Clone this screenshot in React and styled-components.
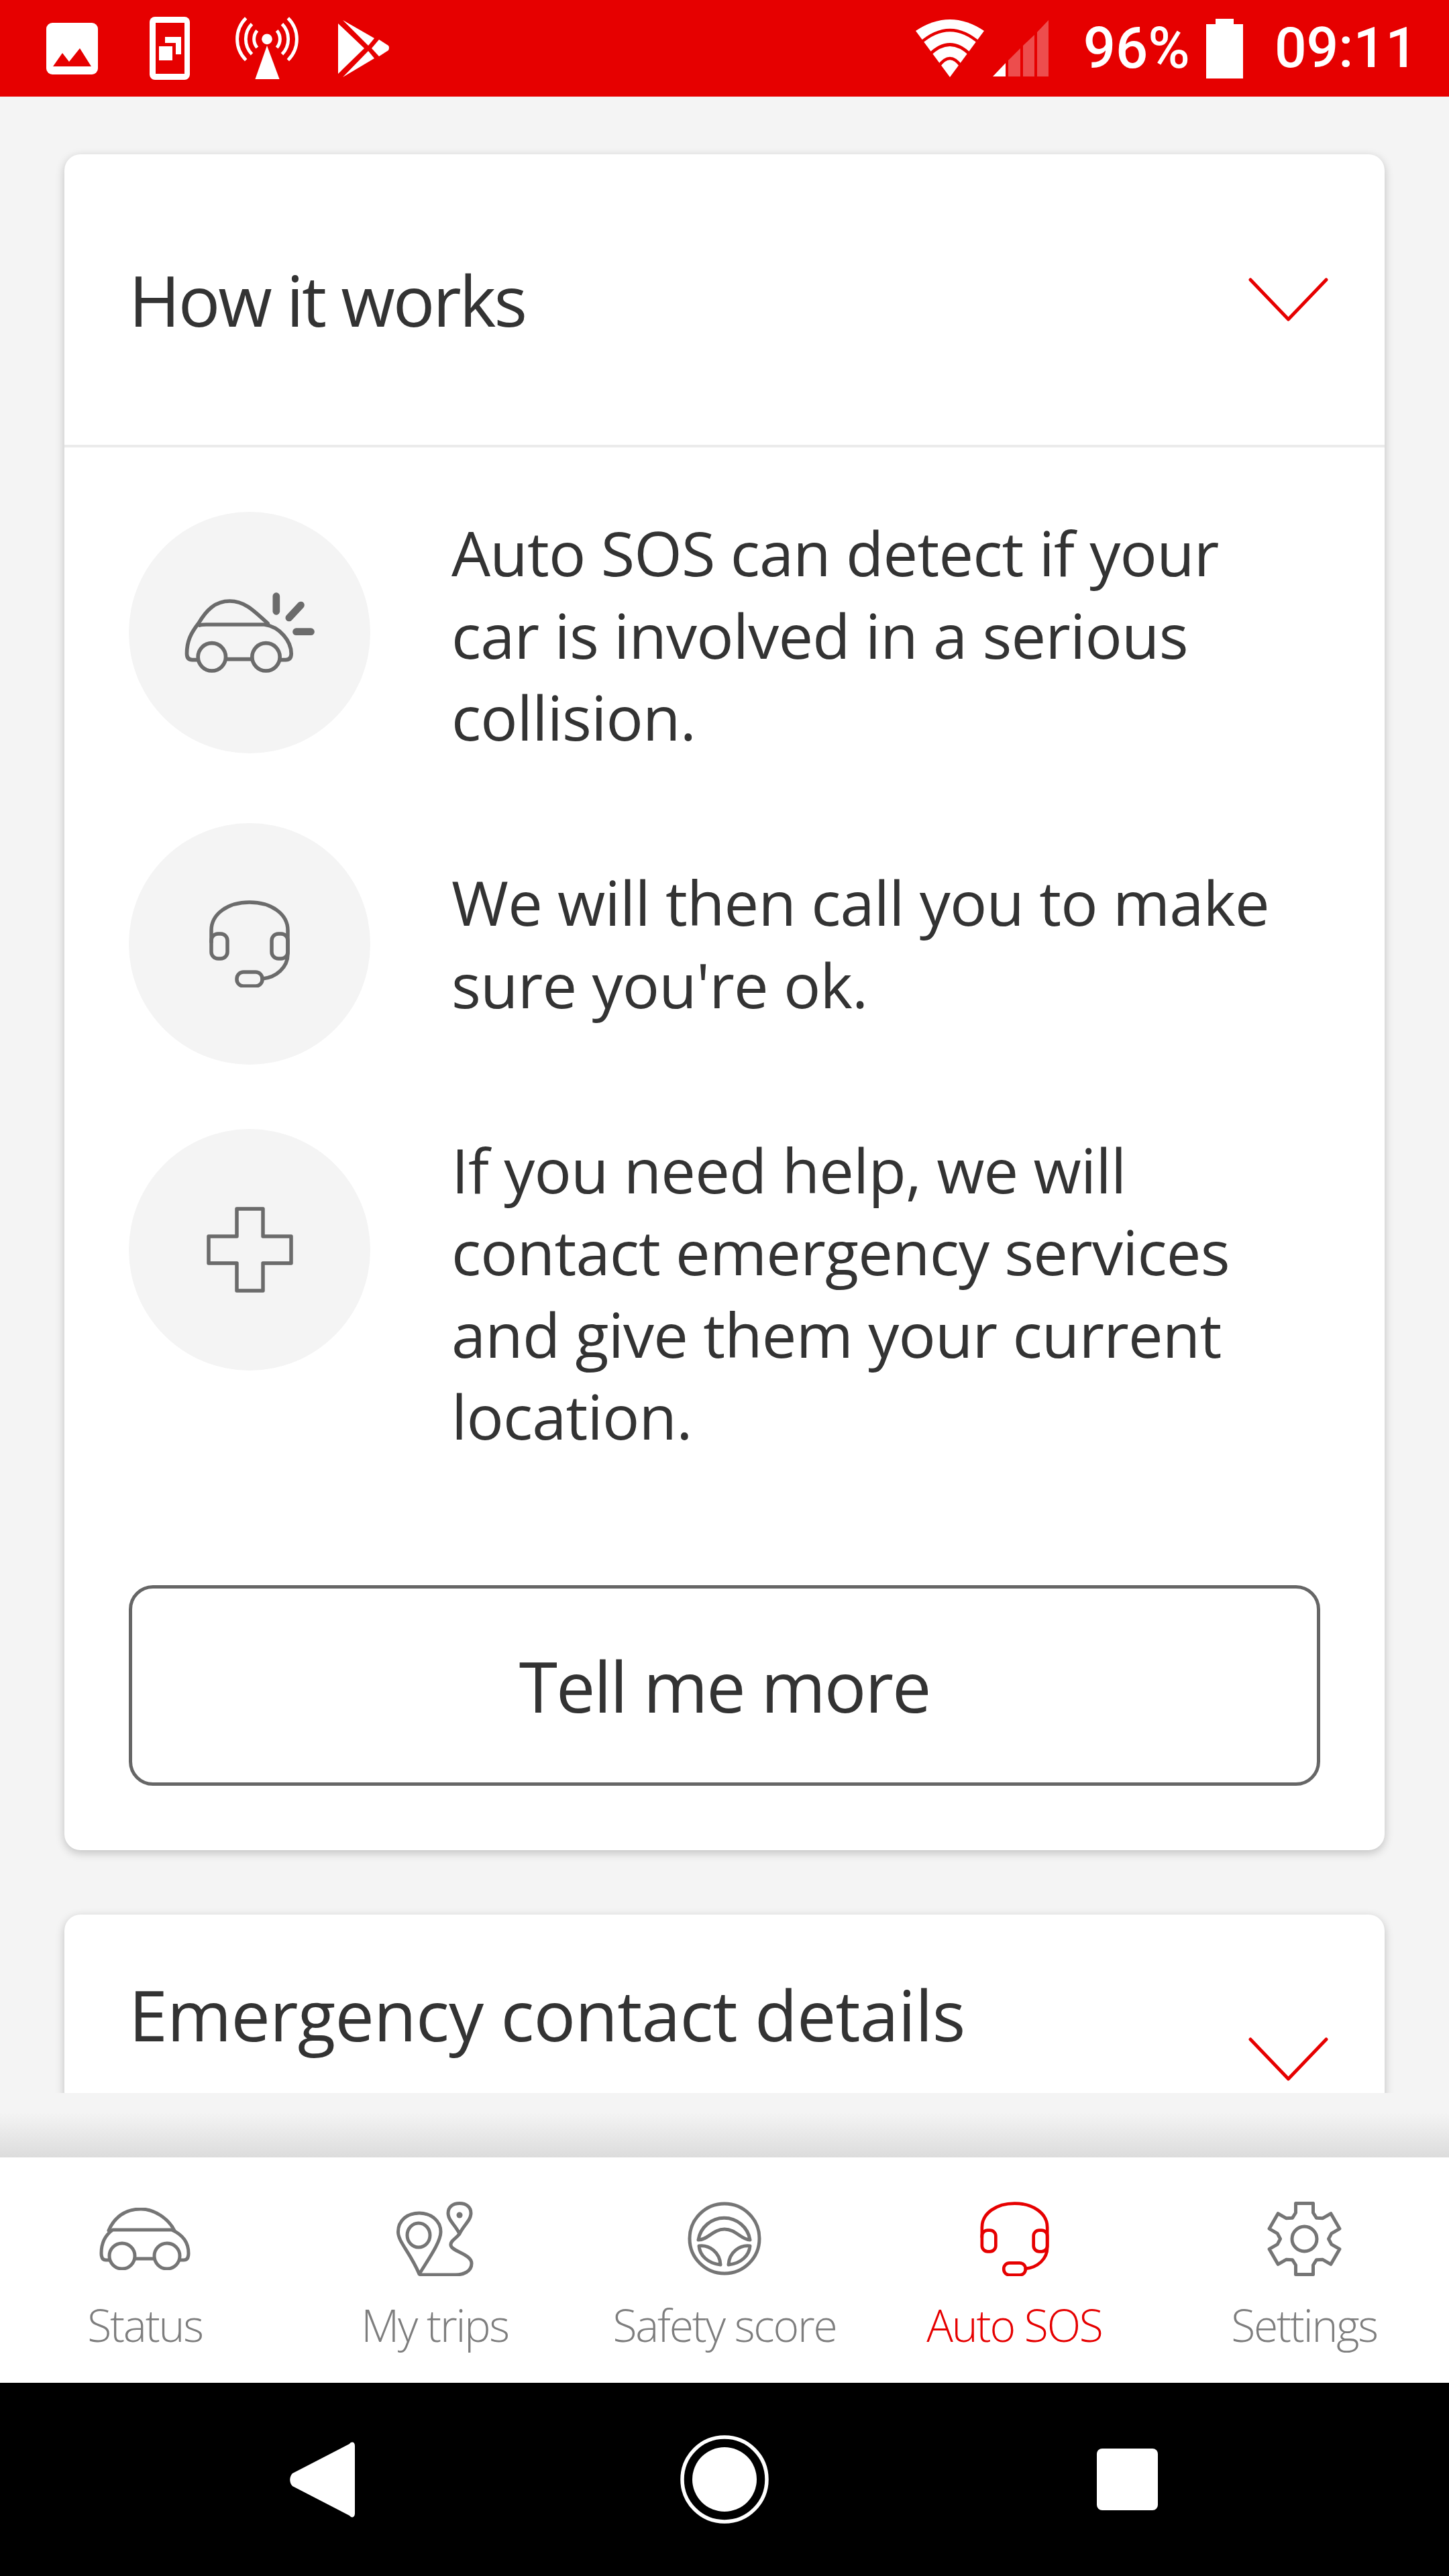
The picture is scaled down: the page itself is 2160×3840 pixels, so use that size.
import React from "react";
import styled, { createGlobalStyle } from "styled-components";

const RED = "#e60000";
const BODY_FONT = `"Open Sans", "Liberation Sans", sans-serif`;

const GlobalStyle = createGlobalStyle`
  html, body {
    margin: 0;
    padding: 0;
    background: #f4f4f4;
  }
`;

const gearPoints = () => {
  const pts = [];
  const c = 55.5;
  for (let i = 0; i < 6; i++) {
    const a = (i * Math.PI) / 3 - Math.PI / 2;
    const at = (r, off) => {
      const x = c + r * Math.cos(a) + off * Math.cos(a + Math.PI / 2);
      const y = c + r * Math.sin(a) + off * Math.sin(a + Math.PI / 2);
      return `${x.toFixed(1)},${y.toFixed(1)}`;
    };
    pts.push(at(39, -13), at(53, -13), at(53, 13), at(39, 13));
    const b = a + Math.PI / 6;
    pts.push(`${(c + 36 * Math.cos(b)).toFixed(1)},${(c + 36 * Math.sin(b)).toFixed(1)}`);
  }
  return pts.join(" ");
};

const ImageIcon = () => (
  <svg width="77" height="77" viewBox="0 0 77 77">
    <rect width="77" height="77" rx="9" fill="#fff" />
    <path d="M10 65 L24 45 L34 58 L50 38 L67 65 Z" fill={RED} />
  </svg>
);

const PhoneIcon = () => (
  <svg width="60" height="94" viewBox="0 0 60 94">
    <rect width="60" height="94" rx="8" fill="#fff" />
    <rect x="9" y="9" width="43" height="76" fill={RED} />
    <rect x="14" y="44" width="20" height="21" fill="#fff" />
    <path d="M23 30 H47 V56 H39 V39 H23 Z" fill="#fff" />
  </svg>
);

const AntennaIcon = () => (
  <svg width="94" height="94" viewBox="0 0 96 94" fill="none">
    <path d="M48 43 L67 94 H30 Z" fill="#fff" />
    <ellipse cx="48" cy="33" rx="8" ry="8" fill="#fff" />
    <g stroke="#fff" strokeWidth="5">
      <path d="M16 1 A45 45 0 0 0 16 65" />
      <path d="M25 10 A33 33 0 0 0 25 56" />
      <path d="M33 20 A20 20 0 0 0 33 46" />
      <path d="M80 1 A45 45 0 0 1 80 65" />
      <path d="M71 10 A33 33 0 0 1 71 56" />
      <path d="M63 20 A20 20 0 0 1 63 46" />
    </g>
  </svg>
);

const PlayIcon = () => (
  <svg width="77" height="85" viewBox="0 0 77 85" fill="#fff">
    <path d="M0 5 L39 42 L0 80 Z" />
    <path d="M7 0 L54 27 L45 38 Z" />
    <path d="M7 85 L54 57 L45 46 Z" />
    <path d="M61 29 L75 38 Q77 41 75 45 L61 54 L50 42 Z" />
  </svg>
);

const WifiIcon = () => (
  <svg width="102" height="86" viewBox="0 0 102 86" fill="none">
    <path d="M0 17 Q51 -17 102 17 L51 86 Z" fill="#fff" />
    <g stroke={RED} strokeWidth="4.5">
      <path d="M6 36 Q51 -4 96 36" />
      <path d="M20 53 Q51 22 82 53" />
      <path d="M34 70 Q51 46 68 70" />
    </g>
  </svg>
);

const SignalIcon = () => (
  <svg width="83" height="84" viewBox="0 0 83 84" fill="#fff">
    <path d="M0 84 L19 64 V84 Z" />
    <g opacity="0.3">
      <path d="M23 60 L41 42 V84 H23 Z" />
      <path d="M45 38 L62 22 V84 H45 Z" />
      <path d="M66 18 L83 0 V84 H66 Z" />
    </g>
  </svg>
);

const BatteryIcon = () => (
  <svg width="55" height="89" viewBox="0 0 55 89" fill="#fff">
    <path d="M14 0 H41 V8 H55 V89 H0 V8 H14 Z" />
  </svg>
);

const Chevron = () => (
  <svg width="119" height="65" viewBox="0 0 119 65" fill="none" stroke={RED} strokeWidth="5" strokeLinecap="round" strokeLinejoin="round">
    <path d="M3 3 L59.5 62 L116 3" />
  </svg>
);

const CrashCarIcon = () => (
  <svg width="197" height="124" viewBox="320 385 590 372" fill="none" stroke="#6b6b6b" strokeWidth="17" strokeLinecap="round" strokeLinejoin="round">
    <path d="M380 693 H358 Q333 693 333 665 C333 610 350 575 385 530 C420 470 460 430 525 430 C590 430 630 470 695 530" />
    <path d="M390 538 Q400 535 420 535 H680 C750 545 800 610 800 665 Q800 693 775 693 H752" />
    <circle cx="445" cy="680" r="62" />
    <circle cx="687" cy="680" r="62" />
    <path d="M510 690 H622" />
    <g strokeWidth="32">
      <path d="M733 408 V476" />
      <path d="M790 505 L843 448" />
      <path d="M822 567 H888" />
    </g>
  </svg>
);

const HeadsetIcon = ({ width, height, color }) => (
  <svg width={width} height={height} viewBox="0 0 120 130" fill="none" stroke={color} strokeWidth="5.5" strokeLinecap="round" strokeLinejoin="round">
    <path d="M3 62 V45 C3 20 28 3 60 3 C92 3 117 20 117 45 V80 C117 100 100 115 79 117" />
    <rect x="3" y="50" width="24" height="37" rx="10" />
    <rect x="93" y="50" width="24" height="37" rx="10" />
    <rect x="41" y="107" width="38" height="21" rx="10" />
  </svg>
);

const CrossIcon = () => (
  <svg width="129" height="128" viewBox="0 0 129 128" fill="none" stroke="#6b6b6b" strokeWidth="5.5" strokeLinejoin="round">
    <path d="M45 3 H84 V44 H126 V84 H84 V125 H45 V84 H3 V44 H45 Z" />
  </svg>
);

const CarIcon = () => (
  <svg width="136" height="93" viewBox="0 0 136 93" fill="none" stroke="#757575" strokeWidth="5" strokeLinecap="round" strokeLinejoin="round">
    <path d="M14 34 C22 15 38 2 62 2 C84 2 104 18 112 34" />
    <path d="M15 78 H10 Q3 78 3 68 C3 52 10 40 20 33 H108 C124 40 133 52 133 68 Q133 78 126 78 H120" />
    <circle cx="34" cy="72" r="19" />
    <circle cx="101" cy="72" r="19" />
    <path d="M53 76 H82" />
  </svg>
);

const TripsIcon = () => (
  <svg width="115" height="111" viewBox="0 0 115 111" fill="none" stroke="#757575" strokeWidth="5" strokeLinejoin="round">
    <path d="M34 108 C20 75 2.5 60 2.5 45 C2.5 28 16 17 34 17 C51 17 66 28 66 45 C66 60 48 85 34 108 Z" />
    <ellipse cx="33" cy="50" rx="17" ry="18" />
    <path d="M94 48 C88 35 77 28 77 17 C77 8 84 2.5 94 2.5 C104 2.5 111 8 111 17 C111 28 100 35 94 48 Z" />
    <circle cx="94" cy="20" r="4.5" fill="#757575" stroke="none" />
    <path d="M94 48 C88 56 80 58 81 65 C82 74 112 78 112 92 C112 104 100 109 88 109 H34" />
  </svg>
);

const WheelIcon = () => (
  <svg width="110" height="110" viewBox="0 0 110 110" fill="none" stroke="#757575" strokeWidth="5" strokeLinejoin="round">
    <circle cx="55" cy="55" r="52" />
    <path d="M16 57 A39 39 0 0 1 93 57 C80 57 72 41 55 41 C38 41 30 57 16 57 Z" />
    <path d="M17 66 C32 64 48 75 49 94 C30 92 18 80 17 66 Z" />
    <path d="M93 66 C78 64 62 75 61 94 C80 92 92 80 93 66 Z" />
  </svg>
);

const GearIcon = () => (
  <svg width="111" height="111" viewBox="0 0 111 111" fill="none" stroke="#757575" strokeWidth="5" strokeLinejoin="round">
    <polygon points={gearPoints()} />
    <circle cx="55.5" cy="55.5" r="18.5" />
  </svg>
);

const steps = [
  { icon: <CrashCarIcon />, text: "Auto SOS can detect if your car is involved in a serious collision." },
  { icon: <HeadsetIcon width={120} height={130} color="#6b6b6b" />, text: "We will then call you to make sure you're ok." },
  { icon: <CrossIcon />, text: "If you need help, we will contact emergency services and give them your current location." },
];

const tabs = [
  { label: "Status", icon: <CarIcon /> },
  { label: "My trips", icon: <TripsIcon /> },
  { label: "Safety score", icon: <WheelIcon /> },
  { label: "Auto SOS", icon: <HeadsetIcon width={103} height={111} color={RED} />, active: true },
  { label: "Settings", icon: <GearIcon /> },
];

export default function App() {
  return (
    <Screen>
      <GlobalStyle />
      <StatusBar>
        <StatusLeft>
          <StatusCell><ImageIcon /></StatusCell>
          <StatusCell><PhoneIcon /></StatusCell>
          <StatusCell><AntennaIcon /></StatusCell>
          <StatusCell><PlayIcon /></StatusCell>
        </StatusLeft>
        <StatusRight>
          <WifiIcon />
          <SignalIcon />
          <Percent>96%</Percent>
          <BatteryIcon />
          <Clock>09:11</Clock>
        </StatusRight>
      </StatusBar>

      <Viewport>
        <Card>
          <CardHeader>
            <CardTitle $tracking={-3}>How it works</CardTitle>
            <Chevron />
          </CardHeader>
          <CardBody>
            <Steps>
              {steps.map((step) => (
                <Step key={step.text}>
                  <IconCircle>{step.icon}</IconCircle>
                  <StepText>
                    <span>{step.text}</span>
                  </StepText>
                </Step>
              ))}
            </Steps>
            <MoreButton>Tell me more</MoreButton>
          </CardBody>
        </Card>
        <ClippedCard>
          <CardTitle $tracking={-0.8}>Emergency contact details</CardTitle>
          <ClippedChevron>
            <Chevron />
          </ClippedChevron>
        </ClippedCard>
      </Viewport>
      <TabShade />

      <TabBar>
        {tabs.map((tab) => (
          <Tab key={tab.label}>
            <TabIcon>{tab.icon}</TabIcon>
            <TabLabel $active={tab.active}>{tab.label}</TabLabel>
          </Tab>
        ))}
      </TabBar>

      <NavBar>
        <NavCell>
          <svg width="97" height="113" viewBox="0 0 97 113" fill="#fff">
            <path d="M97 6 C97 0 92 -1 89 3 L4 47 C-1 52 -1 61 4 66 L89 110 C92 114 97 113 97 107 Z" />
          </svg>
        </NavCell>
        <NavCell>
          <svg width="132" height="132" viewBox="0 0 132 132">
            <circle cx="66" cy="66" r="63" fill="none" stroke="#fff" strokeWidth="5.5" />
            <circle cx="66" cy="66" r="48" fill="#fff" />
          </svg>
        </NavCell>
        <NavCell>
          <NavSquare />
        </NavCell>
      </NavBar>
    </Screen>
  );
}

const Screen = styled.div`
  width: 2160px;
  height: 3840px;
  display: flex;
  flex-direction: column;
  overflow: hidden;
  background: #f4f4f4;
  font-family: ${BODY_FONT};
`;

const StatusBar = styled.div`
  flex: 0 0 144px;
  display: flex;
  align-items: center;
  justify-content: space-between;
  background: ${RED};
  color: #fff;
`;

const StatusLeft = styled.div`
  display: flex;
  padding-left: 35px;
`;

const StatusCell = styled.div`
  width: 145px;
  display: flex;
  align-items: center;
  justify-content: center;
`;

const StatusRight = styled.div`
  display: flex;
  align-items: center;
  padding-right: 47px;

  svg:nth-child(2) {
    margin-left: 13px;
  }
`;

const Percent = styled.span`
  margin: 0 24px 0 52px;
  font-family: Roboto, sans-serif;
  font-weight: 500;
  font-size: 85px;
  line-height: 1;
`;

const Clock = styled.span`
  margin-left: 47px;
  font-family: Roboto, sans-serif;
  font-weight: 500;
  font-size: 84px;
  line-height: 1;
`;

const Viewport = styled.div`
  flex: 0 0 2976px;
  overflow: hidden;
  padding: 86px 96px 0;
  box-sizing: border-box;
`;

const Card = styled.div`
  background: #fff;
  border-radius: 24px;
  box-shadow: 0 4px 14px rgba(0, 0, 0, 0.22);
`;

const CardHeader = styled.div`
  height: 433px;
  padding: 0 84px 0 96px;
  display: flex;
  align-items: center;
  justify-content: space-between;
  border-bottom: 4px solid #ebebeb;
`;

const CardTitle = styled.h2`
  margin: 0;
  font-size: 104px;
  font-weight: 400;
  letter-spacing: ${(p) => p.$tracking}px;
  color: #333;
`;

const CardBody = styled.div`
  padding: 96px;
`;

const Steps = styled.div`
  display: flex;
  flex-direction: column;
  gap: 96px;
  margin-bottom: 190px;
`;

const Step = styled.div`
  display: flex;
  gap: 121px;
`;

const IconCircle = styled.div`
  flex: 0 0 360px;
  height: 360px;
  border-radius: 50%;
  background: #f4f4f4;
  display: flex;
  align-items: center;
  justify-content: center;
`;

const StepText = styled.div`
  flex: 1;
  min-height: 360px;
  display: flex;
  align-items: center;
  font-size: 92px;
  line-height: 122.5px;
  letter-spacing: -0.8px;
  color: #333;
`;

const MoreButton = styled.button`
  display: block;
  width: 100%;
  height: 299px;
  background: #fff;
  border: 5px solid #666;
  border-radius: 36px;
  font-family: inherit;
  font-size: 104px;
  letter-spacing: -2px;
  color: #333;
`;

const ClippedCard = styled(Card)`
  position: relative;
  margin-top: 96px;
  height: 500px;
  padding: 78px 96px 0;
`;

const ClippedChevron = styled.div`
  position: absolute;
  top: 183px;
  right: 84px;
`;

const TabShade = styled.div`
  flex: 0 0 96px;
  background: linear-gradient(to bottom, #f4f4f4 30%, #dcdcdc 100%);
`;

const TabBar = styled.div`
  flex: 0 0 336px;
  display: grid;
  grid-template-columns: repeat(5, 1fr);
  background: #fff;
`;

const Tab = styled.div`
  display: flex;
  flex-direction: column;
  align-items: center;
  padding-top: 64px;
`;

const TabIcon = styled.div`
  height: 114px;
  display: flex;
  align-items: center;
  justify-content: center;
`;

const TabLabel = styled.span`
  margin-top: 26px;
  font-size: 66px;
  font-weight: 300;
  line-height: 90px;
  letter-spacing: -2.2px;
  color: ${(p) => (p.$active ? RED : "#7e7e7e")};
`;

const NavBar = styled.div`
  flex: 1;
  display: grid;
  grid-template-columns: repeat(3, 600px);
  padding: 0 180px;
  background: #000;
`;

const NavCell = styled.div`
  display: flex;
  align-items: center;
  justify-content: center;
`;

const NavSquare = styled.div`
  width: 91px;
  height: 92px;
  border-radius: 8px;
  background: #fff;
`;
